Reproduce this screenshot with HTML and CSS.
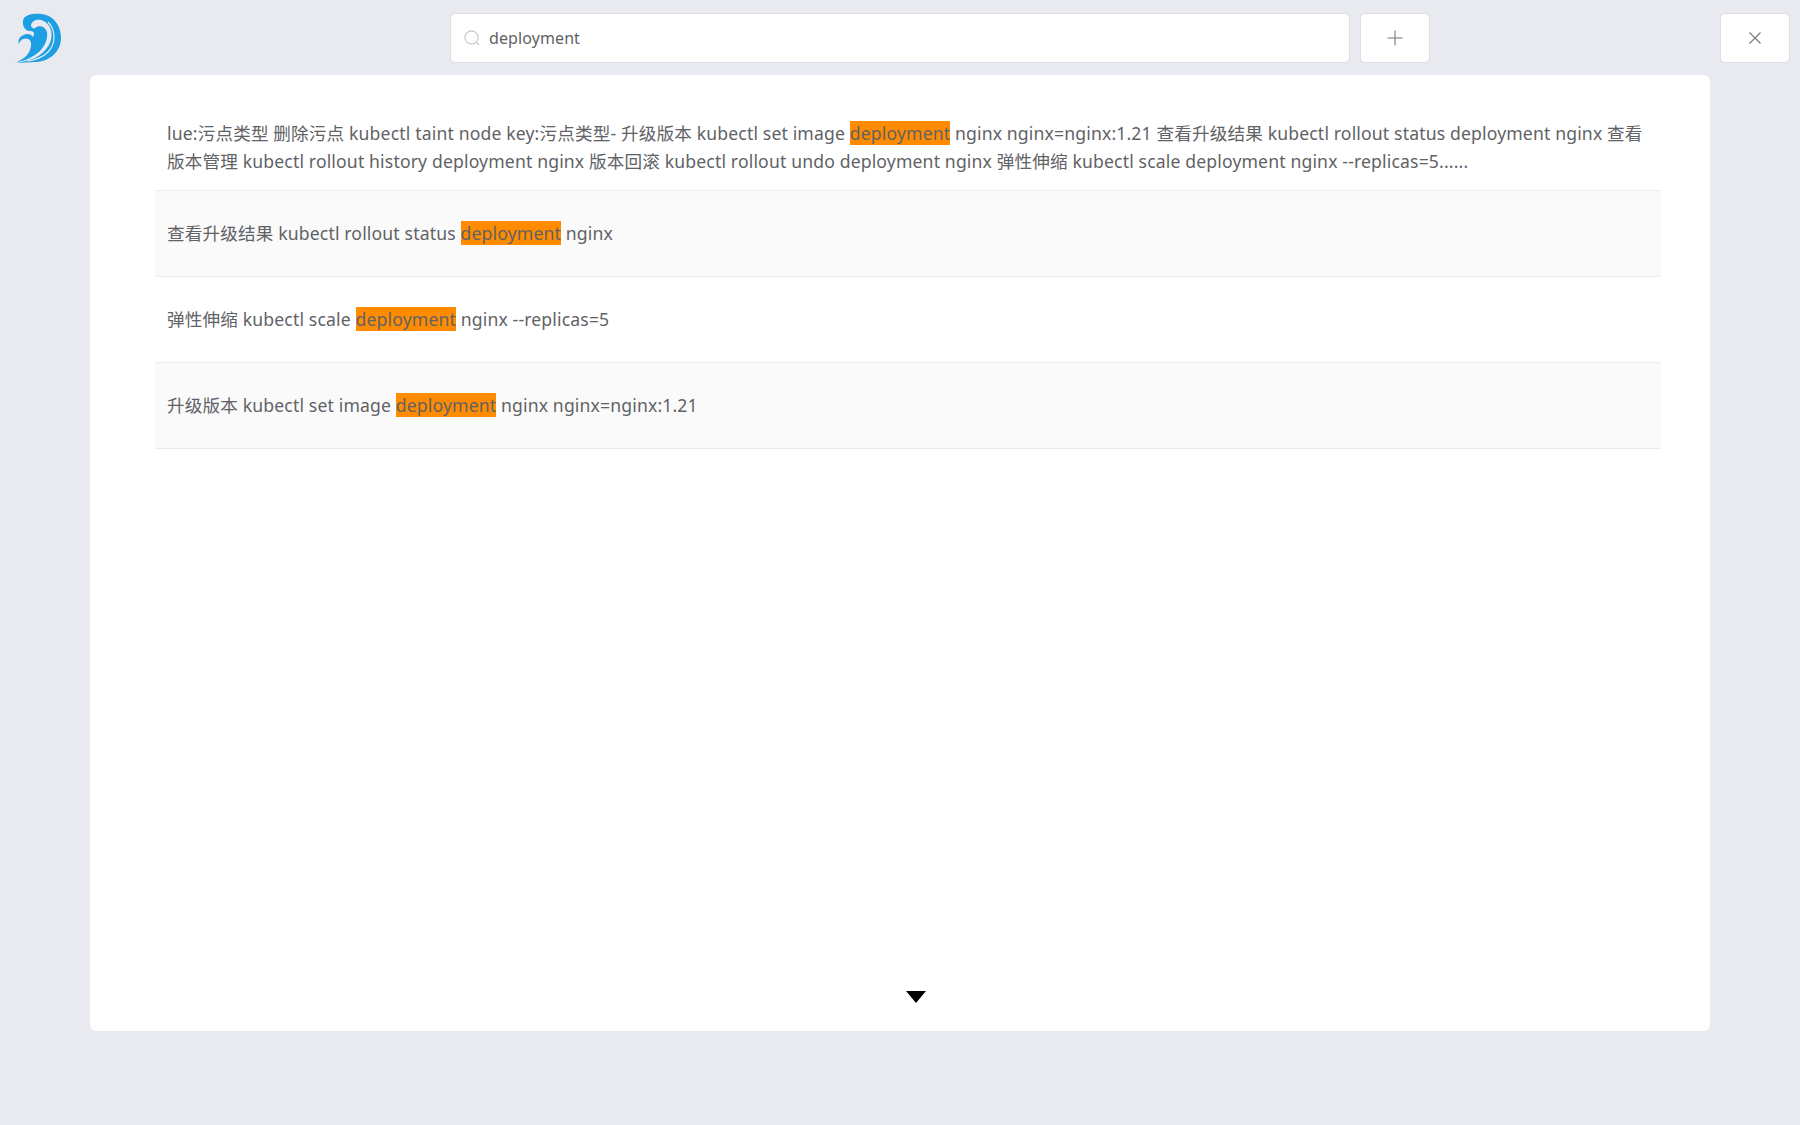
FILE: index.html
```html
<!DOCTYPE html>
<html lang="zh">
<head>
<meta charset="utf-8">
<title>Search</title>
<link rel="stylesheet" href="styles.css">
</head>
<body>
<header class="topbar">
  <svg class="logo" viewBox="0 0 48 50" width="48" height="50">
    <path fill="#1c9fe3" d="M9 5C12 1 20 0 26 1C38 2 46 12 46 25C46 39 34 49 20 49L0 50C14 48 26 45 34 32C39 23 37 10 26 7C20 6 16 9 16 13C17 15 19 16 20 15C24 12 30 13 32 19C33 26 30 33 24 39C18 44 10 48 2 49C9 46 15 41 16 33C17 27 13 24 8 26C6 27 4 29 4 31C2 26 6 22 12 21C15 21 17 22 18 24C20 20 19 18 15 18C9 18 6 10 9 5Z"/>
    <path fill="none" stroke="#e9eaf0" stroke-width="1.2" d="M33 9C41 17 41 31 33 39C28 44 20 47 12 48"/>
  </svg>
  <div class="search">
    <svg class="search-icon" viewBox="0 0 16 16" width="16" height="16">
      <circle cx="7.5" cy="7.5" r="6.6" fill="none" stroke="#c5c8d0" stroke-width="1.2"/>
      <path d="M12.4 12.4L15 15" stroke="#c5c8d0" stroke-width="1.2" fill="none"/>
    </svg>
    <span class="search-text">deployment</span>
  </div>
  <button class="btn btn-add" type="button">
    <svg viewBox="0 0 16 16" width="16" height="16"><path d="M8 .5V15.5M.5 8H15.5" stroke="#777" stroke-width="1.1" fill="none"/></svg>
  </button>
  <button class="btn btn-close" type="button">
    <svg viewBox="0 0 12 12" width="12" height="12"><path d="M.5 .5L11.5 11.5M11.5 .5L.5 11.5" stroke="#777" stroke-width="1.1" fill="none"/></svg>
  </button>
</header>
<main class="card">
  <ul class="results">
    <li class="row row-first">lue:污点类型 删除污点 kubectl taint node key:污点类型- 升级版本 kubectl set image <mark>deployment</mark> nginx nginx=nginx:1.21 查看升级结果 kubectl rollout status deployment nginx 查看版本管理 kubectl rollout history deployment nginx 版本回滚 kubectl rollout undo deployment nginx 弹性伸缩 kubectl scale deployment nginx --replicas=5......</li>
    <li class="row row-alt">查看升级结果 kubectl rollout status <mark>deployment</mark> nginx</li>
    <li class="row">弹性伸缩 kubectl scale <mark>deployment</mark> nginx --replicas=5</li>
    <li class="row row-alt row-last">升级版本 kubectl set image <mark>deployment</mark> nginx nginx=nginx:1.21</li>
  </ul>
  <div class="more"><span class="arrow"></span></div>
</main>
</body>
</html>
```

FILE: styles.css
```css
* { box-sizing: border-box; }
html, body { margin: 0; height: 100%; }
body {
  background: #e9eaf0;
  font-family: "Noto Sans", "Noto Sans CJK SC", sans-serif;
  color: #606266;
  overflow: hidden;
}
.topbar {
  display: flex;
  align-items: center;
  height: 75px;
  padding: 0 10px 0 15px;
}
.logo { flex: none; margin-right: 387px; }
.search {
  flex: none;
  display: flex;
  align-items: center;
  width: 900px;
  height: 50px;
  padding: 0 13px;
  background: #fff;
  border: 1px solid #dcdfe6;
  border-radius: 5px;
  font-size: 16px;
  letter-spacing: .1px;
}
.search-icon { margin-right: 9px; flex: none; }
.btn {
  display: flex;
  align-items: center;
  justify-content: center;
  flex: none;
  width: 70px;
  height: 50px;
  padding: 0;
  background: #fff;
  border: 1px solid #dcdfe6;
  border-radius: 5px;
}
.btn-add { margin-left: 10px; }
.btn-close { margin-left: auto; }
.card {
  display: flex;
  flex-direction: column;
  width: 1620px;
  height: 956px;
  margin-left: 90px;
  padding: 30px 49px 28px 65px;
  background: #fff;
  border-radius: 6px;
}
.results { list-style: none; margin: 0; padding: 0; }
.row {
  padding: 28px 12px 29px;
  border-bottom: 1px solid #ebeef5;
  font-size: 17.6px;
  letter-spacing: .15px;
  line-height: 28px;
  height: 86px;
}
.row-first { height: auto; padding: 14px 12px 15px; }
.row-alt { background: #fafafa; }
.row-last { border-bottom-color: #e4eaf1; }
mark { background: #ff8c00; color: #606266; }
.more { display: flex; justify-content: center; margin-top: auto; padding-left: 15px; }
.arrow {
  width: 0;
  height: 0;
  border-left: 10px solid transparent;
  border-right: 10px solid transparent;
  border-top: 12px solid #000;
}
```
